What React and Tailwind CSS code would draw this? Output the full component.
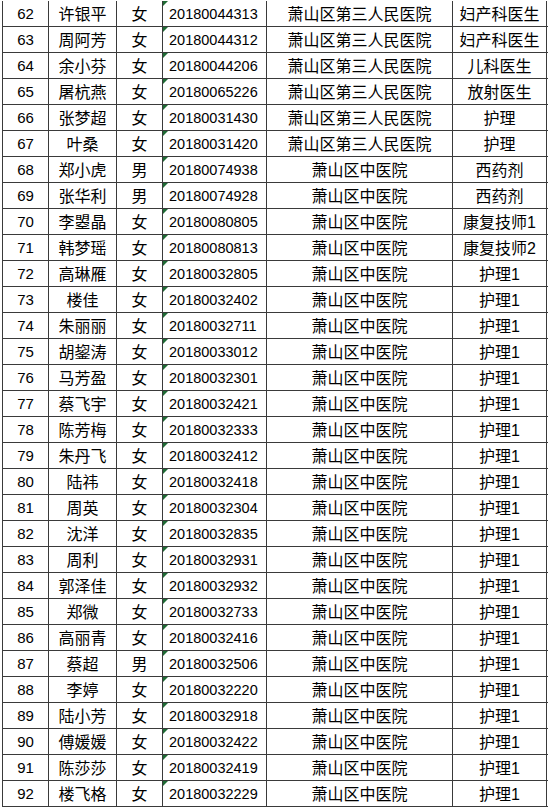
const FONT = '"Liberation Sans", "Noto Sans CJK SC", sans-serif'

const ROWS = [
  [62, '许银平', '女', '20180044313', '萧山区第三人民医院', '妇产科医生'],
  [63, '周阿芳', '女', '20180044312', '萧山区第三人民医院', '妇产科医生'],
  [64, '余小芬', '女', '20180044206', '萧山区第三人民医院', '儿科医生'],
  [65, '屠杭燕', '女', '20180065226', '萧山区第三人民医院', '放射医生'],
  [66, '张梦超', '女', '20180031430', '萧山区第三人民医院', '护理'],
  [67, '叶桑', '女', '20180031420', '萧山区第三人民医院', '护理'],
  [68, '郑小虎', '男', '20180074938', '萧山区中医院', '西药剂'],
  [69, '张华利', '男', '20180074928', '萧山区中医院', '西药剂'],
  [70, '李曌晶', '女', '20180080805', '萧山区中医院', '康复技师1'],
  [71, '韩梦瑶', '女', '20180080813', '萧山区中医院', '康复技师2'],
  [72, '高琳雁', '女', '20180032805', '萧山区中医院', '护理1'],
  [73, '楼佳', '女', '20180032402', '萧山区中医院', '护理1'],
  [74, '朱丽丽', '女', '20180032711', '萧山区中医院', '护理1'],
  [75, '胡鋆涛', '女', '20180033012', '萧山区中医院', '护理1'],
  [76, '马芳盈', '女', '20180032301', '萧山区中医院', '护理1'],
  [77, '蔡飞宇', '女', '20180032421', '萧山区中医院', '护理1'],
  [78, '陈芳梅', '女', '20180032333', '萧山区中医院', '护理1'],
  [79, '朱丹飞', '女', '20180032412', '萧山区中医院', '护理1'],
  [80, '陆祎', '女', '20180032418', '萧山区中医院', '护理1'],
  [81, '周英', '女', '20180032304', '萧山区中医院', '护理1'],
  [82, '沈洋', '女', '20180032835', '萧山区中医院', '护理1'],
  [83, '周利', '女', '20180032931', '萧山区中医院', '护理1'],
  [84, '郭泽佳', '女', '20180032932', '萧山区中医院', '护理1'],
  [85, '郑微', '女', '20180032733', '萧山区中医院', '护理1'],
  [86, '高丽青', '女', '20180032416', '萧山区中医院', '护理1'],
  [87, '蔡超', '男', '20180032506', '萧山区中医院', '护理1'],
  [88, '李婷', '女', '20180032220', '萧山区中医院', '护理1'],
  [89, '陆小芳', '女', '20180032918', '萧山区中医院', '护理1'],
  [90, '傅媛媛', '女', '20180032422', '萧山区中医院', '护理1'],
  [91, '陈莎莎', '女', '20180032419', '萧山区中医院', '护理1'],
  [92, '楼飞格', '女', '20180032229', '萧山区中医院', '护理1'],
]

// 单元格：宽度含右边框
function Cell({ className = '', children }) {
  return (
    <div className={`relative flex h-full items-center border-r border-[#3a3a3a] pt-[2px] ${className}`}>
      {children}
    </div>
  )
}

export default function App() {
  return (
    <div className="min-h-screen w-[551px] bg-white pt-px text-black" style={{ fontFamily: FONT }}>
      <div className="ml-[2px] w-[546px] border-l border-[#3a3a3a]">
        {ROWS.map(([no, name, sex, id, hospital, role]) => (
          <div key={no} className="flex h-[26px] border-b border-[#3a3a3a]">
            <Cell className="w-[46px] justify-center text-[15px]">{no}</Cell>
            <Cell className="w-[68px] justify-center text-[16px]">{name}</Cell>
            <Cell className="w-[46px] justify-center text-[16px]">{sex}</Cell>
            <Cell className="w-[104px] pl-[6px] text-[14.5px]">
              <span className="absolute left-0 top-0 h-0 w-0 border-r-[5px] border-t-[5px] border-r-transparent border-t-[#1f6b35]" />
              {id}
            </Cell>
            <Cell className="w-[186px] justify-center text-[16px]">{hospital}</Cell>
            <Cell className="w-[94px] justify-center text-[16px]">{role}</Cell>
          </div>
        ))}
      </div>
    </div>
  )
}
